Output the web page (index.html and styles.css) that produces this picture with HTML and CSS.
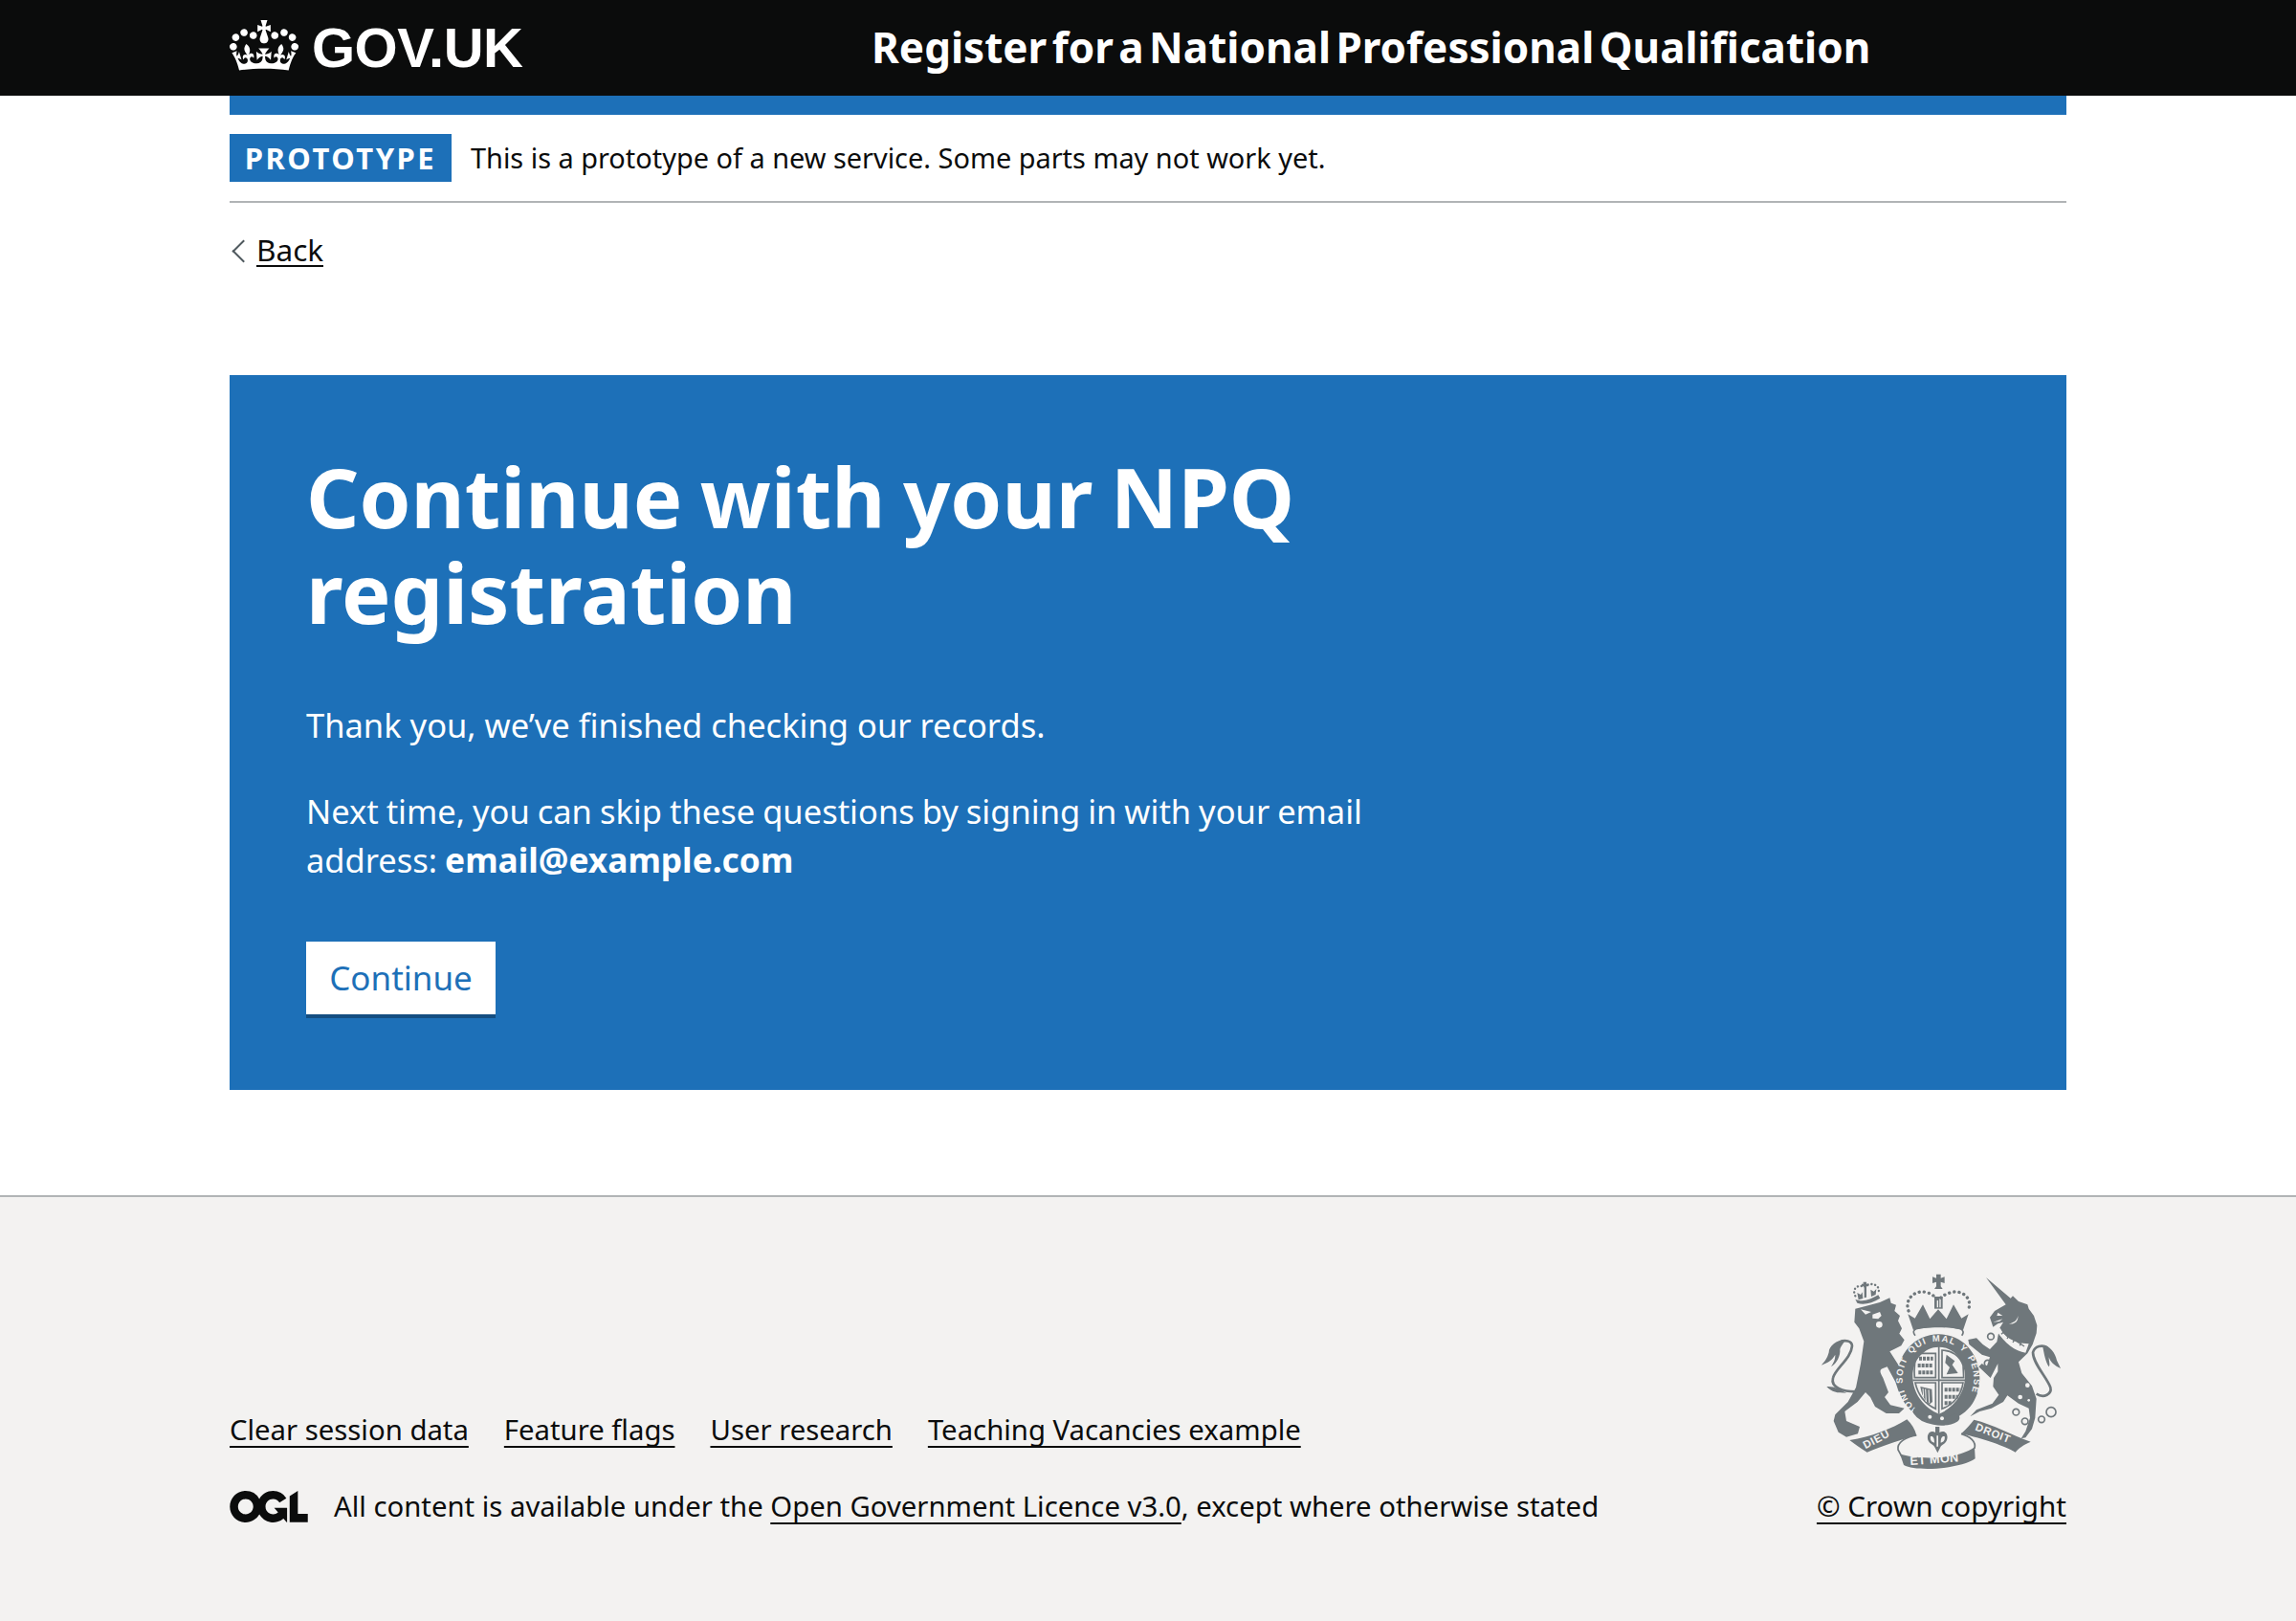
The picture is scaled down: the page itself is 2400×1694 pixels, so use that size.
FILE: index.html
```html
<!DOCTYPE html>
<html lang="en">
<head>
<meta charset="utf-8">
<title>Register for a National Professional Qualification</title>
<link rel="stylesheet" href="styles.css">
</head>
<body>
<header class="header">
  <div class="container header-inner">
    <a class="logo" href="#">
      <svg class="crown" viewBox="0 0 132 97" aria-hidden="true"><path fill="#fff" d="M25 30.2c3.5 1.5 7.7-.2 9.1-3.7 1.5-3.6-.2-7.8-3.9-9.2-3.6-1.4-7.6.3-9.1 3.9-1.4 3.5.3 7.5 3.9 9zM9 39.5c3.6 1.5 7.8-.2 9.2-3.7 1.5-3.6-.2-7.8-3.9-9.1-3.6-1.5-7.6.2-9.1 3.8-1.4 3.5.3 7.5 3.8 9zM4.4 57.2c3.5 1.5 7.7-.2 9.1-3.8 1.5-3.6-.2-7.7-3.9-9.1-3.5-1.5-7.6.3-9.1 3.8-1.4 3.5.3 7.6 3.9 9.1zm38.3-21.4c3.5 1.5 7.7-.2 9.1-3.8 1.5-3.6-.2-7.7-3.9-9.1-3.6-1.5-7.6.3-9.1 3.8-1.3 3.6.4 7.7 3.9 9.1zm64.4-5.6c-3.6 1.5-7.8-.2-9.1-3.7-1.5-3.6.2-7.8 3.8-9.2 3.6-1.4 7.7.3 9.2 3.9 1.3 3.5-.4 7.5-3.9 9zm15.9 9.3c-3.6 1.5-7.7-.2-9.1-3.7-1.5-3.6.2-7.8 3.7-9.1 3.6-1.5 7.7.2 9.2 3.8 1.5 3.5-.3 7.5-3.8 9zm4.7 17.7c-3.6 1.5-7.8-.2-9.2-3.8-1.5-3.6.2-7.7 3.9-9.1 3.6-1.5 7.7.3 9.2 3.8 1.3 3.5-.4 7.6-3.9 9.1zM89.3 35.8c-3.6 1.5-7.8-.2-9.2-3.8-1.4-3.6.2-7.7 3.9-9.1 3.6-1.5 7.7.3 9.2 3.8 1.4 3.6-.3 7.7-3.9 9.1zM69.7 17.7l8.9 4.7V9.3l-8.9 2.8c-.2-.3-.5-.6-.9-.9L72.4 0H59.6l3.6 11.2c-.3.3-.6.5-.9.9l-8.8-2.8v13.1l8.8-4.7c.3.3.6.7.9.9l-5 15.4v.1c-.2.8-.4 1.6-.4 2.4 0 4.1 3.1 7.5 7 8.1h.2c.3 0 .7.1 1 .1.4 0 .7 0 1-.1h.2c4-.6 7.1-4.1 7.1-8.1 0-.8-.1-1.7-.4-2.4V34l-5.1-15.4c.4-.2.7-.6 1-.9zM66 92.8c16.9 0 32.8 1.1 47.1 3.2 4-16.9 8.9-26.7 14-33.5l-9.6-3.4c1 4.9 1.1 7.2 0 10.2-1.5-1.4-3-4.3-4.2-8.7L108.6 76c2.8-2 5-3.2 7.5-3.3-4.4 9.4-10 11.9-13.6 11.2-4.3-.8-6.3-4.6-5.6-7.9 1-4.7 5.7-5.9 8-.5 4.3-8.7-3-11.4-7.6-8.8 7.1-7.2 7.9-13.5 2.1-21.1-8 6.1-8.1 12.3-4.5 20.8-4.7-5.4-12.1-2.5-9.5 6.2 3.4-5.2 7.9-2 7.2 3.1-.6 4.3-6.4 7.8-13.5 7.2-10.3-.9-10.9-8-11.2-13.8 2.5-.5 7.1 1.8 11 7.3L80.2 60c-4.1 4.4-8 5.3-12.3 5.4 1.4-4.4 8-11.6 8-11.6H55.5s6.4 7.2 7.9 11.6c-4.2-.1-8-1-12.3-5.4l1.4 16.4c3.9-5.5 8.5-7.7 11-7.3-.3 5.8-.9 12.8-11.1 13.8-7.2.6-12.9-2.9-13.5-7.2-.7-5 3.8-8.3 7.1-3.1 2.7-8.7-4.6-11.6-9.4-6.2 3.7-8.5 3.6-14.7-4.6-20.8-5.8 7.6-5 13.9 2.2 21.1-4.7-2.6-11.9.1-7.7 8.8 2.3-5.5 7.1-4.2 8.1.5.7 3.3-1.3 7.1-5.7 7.9-3.5.7-9-1.8-13.5-11.2 2.5.1 4.7 1.3 7.5 3.3l-4.7-15.4c-1.2 4.4-2.7 7.2-4.3 8.7-1.1-3-.9-5.3 0-10.2l-9.5 3.4c5 6.9 9.9 16.7 14 33.5 14.8-2.1 30.8-3.2 47.7-3.2z"/></svg>
      <span class="logotype">GOV.UK</span>
    </a>
    <a class="service-name" href="#">Register for a National Professional Qualification</a>
  </div>
</header>

<div class="container">
  <div class="blue-bar"></div>
  <div class="phase-banner">
    <strong class="tag">PROTOTYPE</strong>
    <span class="phase-text">This is a prototype of a new service. Some parts may not work yet.</span>
  </div>
  <a class="back-link" href="#">Back</a>

  <main class="panel">
    <h1 class="panel-title">Continue with your NPQ registration</h1>
    <p class="panel-body panel-lead">Thank you, we’ve finished checking our records.</p>
    <p class="panel-body">Next time, you can skip these questions by signing in with your email address: <strong class="panel-email">email@example.com</strong></p>
    <a class="button" href="#">Continue</a>
  </main>
</div>

<footer class="footer">
  <div class="container footer-inner">
    <div class="footer-meta">
      <ul class="footer-links">
        <li><a href="#">Clear session data</a></li>
        <li><a href="#">Feature flags</a></li>
        <li><a href="#">User research</a></li>
        <li><a href="#">Teaching Vacancies example</a></li>
      </ul>
      <div class="licence">
        <svg class="ogl" viewBox="0 0 483.2 195.7" aria-hidden="true"><path fill="#0b0c0c" d="M421.5 142.8V.1l-50.7 32.3v161.1h112.4v-50.7zm-122.3-9.6A47.12 47.12 0 0 1 221 97.8c0-26 21.1-47.1 47.1-47.1 16.7 0 31.4 8.7 39.7 21.8l42.7-27.2A97.63 97.63 0 0 0 268.1 0c-36.5 0-68.3 20.1-85.1 49.7A98 98 0 0 0 97.8 0C43.9 0 0 43.9 0 97.8s43.9 97.8 97.8 97.8c36.5 0 68.3-20.1 85.1-49.7a97.76 97.76 0 0 0 149.6 25.4l19.4 22.2h3v-87.8h-80l24.3 27.5zM97.8 145c-26 0-47.1-21.1-47.1-47.1s21.1-47.1 47.1-47.1 47.2 21 47.2 47S123.8 145 97.8 145"/></svg>
        <span>All content is available under the <a href="#">Open Government Licence v3.0</a>, except where otherwise stated</span>
      </div>
    </div>
    <div class="copyright">
      <svg class="arms" viewBox="0 0 780 645" aria-hidden="true">
        <!-- lion crown -->
        <path class="af" d="M118 98 C140 108 165 100 190 85 L196 95 C170 110 145 118 124 110 Z"/>
        <path class="af" d="M143 44 H153 V50 H159 V58 H153 V92 L146 94 V58 H138 V50 H143 Z M128 100 L124 78 L135 84 L140 76 L142 96 Z M168 90 L166 68 L176 74 L184 66 L182 84 Z"/>
        <path class="al-dots" d="M118 88 C106 64 128 50 146 60 C164 42 200 52 190 80"/>
        <!-- lion -->
        <path class="af" d="M118 128 L150 120 L195 108 L226 94 L230 110 L246 116 L241 135 L258 150 L252 166 L264 190 L256 206 L272 226 L262 244 L226 262 L262 318 L268 345 L286 365 L274 396 L254 388 L244 358 L218 310 C195 318 190 318 205 345 L222 390 L210 405 L228 430 L272 440 L255 456 L215 456 L180 435 L165 405 L150 390 L125 420 L85 450 L90 480 L132 498 L126 520 L90 530 L65 515 L50 480 L55 460 L95 420 L120 375 L135 300 L145 230 L130 190 L115 170 Z"/>
        <path class="al" d="M135 130 L168 138 L150 146 Z M172 146 L195 138 L200 150 L190 160 L172 158 Z"/>
        <circle class="al" cx="193" cy="178" r="10"/>
        <path class="as" d="M118 388 C80 388 40 375 48 345 C55 315 105 285 108 245 C108 228 85 225 70 232"/>
        <path class="af" d="M85 225 C60 225 35 245 35 265 C30 285 20 295 12 305 C35 295 45 290 55 272 C55 290 50 295 42 310 C60 300 72 275 70 255 C75 240 85 235 85 225 Z M28 372 C50 370 70 380 90 392 C60 392 45 390 28 372 Z"/>

        <!-- centre crown -->
        <path class="af" d="M372 20 H386 V32 L398 28 V48 L386 44 V58 L392 66 H366 L372 58 V44 L360 48 V28 L372 32 Z"/>
        <path class="af" d="M366 90 H392 V128 H366 Z"/>
        <path class="al" d="M374 94 H378 V124 H374 Z M382 94 H386 V124 H382 Z"/>
        <path class="af" d="M283 145 L305 158 L330 115 L352 160 L378 130 L404 160 L426 115 L451 158 L473 145 L456 195 C420 184 336 184 300 195 Z"/>
        <path class="al-dots wide" d="M285 135 C270 95 310 65 345 78 C360 82 368 92 378 100 C388 92 398 82 415 78 C450 65 490 95 471 135"/>
        <path class="as thin" d="M306 212 C296 200 302 194 312 190 C350 180 405 180 445 190 C456 194 460 202 452 212"/>

        <!-- garter -->
        <path class="af" fill-rule="evenodd" d="M380 208 C458 208 508 272 508 345 C508 420 460 478 380 482 C302 478 250 420 250 345 C250 272 302 208 380 208 Z M380 248 C335 248 298 288 298 340 C298 395 335 440 380 458 C425 440 462 395 462 340 C462 288 425 248 380 248 Z"/>
        <path id="garter-arc" class="none" d="M318 448 A112 118 0 1 1 446 442"/>
        <text class="arms-motto"><textPath href="#garter-arc">HONI SOIT QUI MAL Y PENSE</textPath></text>

        <!-- shield -->
        <path class="as thin" d="M380 244 V458 M298 352 H462"/>
        <path class="as thin" d="M310 268 H370 V344 H304 C302 315 304 290 310 268 Z M390 258 C420 258 445 275 456 305 L458 344 H390 Z M306 360 H370 V442 C340 428 315 400 306 360 Z M390 360 H456 C450 400 425 428 390 442 Z"/>
        <path class="stripes" d="M318 284 H362 M314 306 H362 M316 328 H362 M398 382 H448 M398 404 H440 M398 424 H422"/>
        <path class="af" d="M404 272 L430 292 L422 304 L440 330 L404 334 L414 312 L400 298 Z"/>
        <path class="af" d="M322 372 L358 380 L360 420 L350 428 C335 415 325 395 322 372 Z"/>
        <path class="stripes-light" d="M338 380 L340 420 M348 382 L350 424 M330 378 L332 404"/>

        <!-- buckle strap -->
        <path class="strap" d="M312 450 C330 478 395 492 432 470"/>
        <circle class="al" cx="352" cy="467" r="6"/>
        <circle class="al" cx="390" cy="472" r="6"/>

        <!-- fleur -->
        <path class="af" d="M369 498 H382 V516 C396 508 412 518 405 540 C400 554 388 552 384 564 L376 580 L368 564 C364 552 352 554 346 540 C340 518 356 508 369 516 Z"/>
        <path class="al" d="M373 526 H378 V560 H373 Z M354 528 C362 526 366 532 366 548 C356 546 352 538 354 528 Z M398 528 C390 526 386 532 386 548 C396 546 400 538 398 528 Z"/>

        <!-- ribbons -->
        <path class="af" d="M100 540 C170 530 230 505 280 475 C295 490 305 505 310 525 C270 535 200 560 155 578 C135 565 115 552 100 540 Z"/>
        <path class="as thin" d="M310 525 C275 530 248 548 252 570 L264 592"/>
        <path class="af" d="M258 583 C310 602 440 602 492 562 L494 598 C450 630 310 640 270 618 Z"/>
        <path class="af" d="M490 476 C550 490 610 525 668 545 C645 555 630 565 620 578 C590 560 520 535 450 520 C465 505 480 490 490 476 Z"/>
        <path class="as thin" d="M450 520 C478 528 498 545 492 566"/>
        <text class="arms-label" x="150" y="568" transform="rotate(-28 150 568)">DIEU</text>
        <text class="arms-label large" x="290" y="618" transform="rotate(-4 290 618)">ET MON</text>
        <text class="arms-label" x="492" y="508" transform="rotate(21 492 508)">DROIT</text>

        <!-- unicorn -->
        <g transform="translate(390 0)">
          <path class="af" d="M138 30 L215 95 L222 88 L240 105 L268 115 L272 128 L288 150 L298 180 L296 205 L284 240 L268 268 L240 295 L250 330 L282 370 L296 410 L292 470 L282 505 L262 532 L248 535 L262 512 L276 470 L272 440 L240 425 L205 400 L192 420 L155 440 L118 450 L88 466 L108 445 L158 425 L178 398 L160 372 L162 345 L175 325 L175 300 L152 345 L115 310 L125 300 L140 310 L150 280 L125 272 L85 240 L82 225 L108 220 L128 240 L150 255 L172 232 L180 190 L192 170 L175 175 L160 185 L150 155 L165 135 L200 115 Z"/>
          <path class="al" d="M172 198 L182 188 C195 215 220 235 272 238 L262 266 C230 262 195 235 172 198 Z"/>
          <path class="crown-points" d="M186 208 L194 200 M204 222 L210 212 M222 234 L228 224 M244 244 L248 234 M194 204 L258 246"/>
          <path class="al" d="M175 140 L190 150 L172 150 Z M160 170 L190 160 L180 168 Z M238 150 C236 165 225 172 210 175 C225 178 240 170 238 150 Z"/>
          <circle class="al" cx="275" cy="322" r="9"/>
          <circle class="al" cx="268" cy="368" r="7"/>
          <circle class="al" cx="245" cy="405" r="7"/>
          <circle class="al" cx="272" cy="415" r="4"/>
          <circle class="ar" cx="153" cy="215" r="10"/>
          <circle class="ar" cx="143" cy="299" r="10"/>
          <circle class="ar" cx="232" cy="452" r="10"/>
          <circle class="ar" cx="260" cy="481" r="10"/>
          <circle class="ar" cx="312" cy="475" r="10"/>
          <circle class="ar" cx="342" cy="452" r="15"/>
          <path class="as" d="M296 395 C320 410 345 395 340 375 C330 345 285 300 285 265 C290 245 315 240 330 250"/>
          <path class="af" d="M315 243 C335 240 355 265 360 290 L372 315 C350 305 340 295 335 280 C335 295 340 305 335 310 C325 295 320 270 315 243 Z"/>
        </g>
      </svg>
      <a href="#">© Crown copyright</a>
    </div>
  </div>
</footer>
</body>
</html>
```
FILE: styles.css
```css
* { box-sizing: border-box; }
html, body { margin: 0; padding: 0; }
body {
  font-family: "Noto Sans", "Liberation Sans", sans-serif;
  color: #0b0c0c;
  background: #fff;
  min-height: 1694px;
  display: flex;
  flex-direction: column;
}
a { color: inherit; }
.container { width: 1920px; margin: 0 240px; }

.header { background: #0b0c0c; height: 100px; flex: none; }
.header-inner { display: flex; align-items: center; height: 100px; }
.logo { display: flex; align-items: center; width: 671px; color: #fff; text-decoration: none; }
.crown { width: 72px; height: 53px; margin-right: 14px; margin-bottom: 5px; }
.logotype { font: 700 58px/1 "Liberation Sans", sans-serif; letter-spacing: -0.5px; }
.service-name { color: #fff; text-decoration: none; font-weight: 700; font-size: 44px; line-height: 50px; word-spacing: -6px; padding-bottom: 3px; }

.blue-bar { height: 20px; background: #1d70b8; }
.phase-banner { display: flex; align-items: center; height: 92px; border-bottom: 2px solid #b1b4b6; }
.tag { background: #1d70b8; color: #fff; width: 232px; height: 50px; display: flex; align-items: center; justify-content: center; font: 700 31px/1 "Noto Sans", sans-serif; letter-spacing: 2.5px; margin-right: 20px; }
.phase-text { font-size: 28.9px; line-height: 40px; }

.back-link { display: block; width: fit-content; height: 37px; margin-top: 30px; margin-left: 28px; font-size: 31.5px; line-height: 38px; position: relative; text-decoration: none; border-bottom: 2px solid #0b0c0c; }
.back-link::before { content: ""; position: absolute; left: -22px; top: 12px; width: 15px; height: 15px; border-left: 2px solid #505a5f; border-bottom: 2px solid #505a5f; transform: rotate(45deg); }

.panel { background: #1d70b8; color: #fff; margin-top: 113px; padding: 77px 80px 0; height: 747px; }
.panel-title { margin: 0 0 64px; max-width: 1200px; font-size: 86.5px; line-height: 100px; font-weight: 700; word-spacing: -4px; }
.panel-body { margin: 0 0 40px; max-width: 1120px; font-size: 34.5px; line-height: 50px; word-spacing: -1px; }
.panel-lead { word-spacing: 0; }
.panel-email { font-size: 35.3px; }
.button { display: block; margin-top: 60px; width: 198px; height: 76px; background: #fff; color: #1d70b8; box-shadow: 0 4px 0 #144e81; text-decoration: none; text-align: center; font-size: 35px; line-height: 76px; }

.footer { flex: 1; margin-top: 110px; background: #f3f2f1; border-top: 2px solid #b1b4b6; }
.footer-inner { display: flex; justify-content: space-between; align-items: flex-end; padding-top: 74px; }
.footer-links { list-style: none; margin: 0 0 40px; padding: 0; display: flex; gap: 37px; font-size: 29.3px; line-height: 40px; }
.footer-links a, .licence a, .copyright a { text-decoration-thickness: 2px; text-underline-offset: 6px; text-decoration-skip-ink: none; }
.licence { display: flex; align-items: center; font-size: 29.3px; line-height: 40px; }
.ogl { width: 82px; height: 33px; margin-right: 27px; flex: none; }
.copyright { display: flex; flex-direction: column; align-items: flex-end; font-size: 29.6px; line-height: 40px; }

.arms { display: block; width: 260px; height: 215px; margin-bottom: 14px; }
.af { fill: #6f777b; }
.al { fill: #f3f2f1; }
.ar { fill: none; stroke: #6f777b; stroke-width: 5; }
.as { fill: none; stroke: #6f777b; stroke-width: 8; }
.as.thin { stroke-width: 5; }
.none { fill: none; }
.al-dots { fill: none; stroke: #6f777b; stroke-width: 7; stroke-linecap: round; stroke-dasharray: 0.5 11; }
.al-dots.wide { stroke-width: 10; stroke-dasharray: 0.5 15; }
.stripes { fill: none; stroke: #6f777b; stroke-width: 12; stroke-dasharray: 9 3; }
.stripes-light { fill: none; stroke: #f3f2f1; stroke-width: 3; }
.crown-points { fill: none; stroke: #6f777b; stroke-width: 4; }
.strap { fill: none; stroke: #6f777b; stroke-width: 26; stroke-linecap: round; }
.arms-motto { fill: #f3f2f1; font: 700 28px "Liberation Sans", sans-serif; letter-spacing: 4px; word-spacing: 5px; }
.arms-label { fill: #f3f2f1; font: 700 34px "Liberation Sans", sans-serif; letter-spacing: 2px; }
.arms-label.large { font-size: 38px; letter-spacing: 1px; }
```
